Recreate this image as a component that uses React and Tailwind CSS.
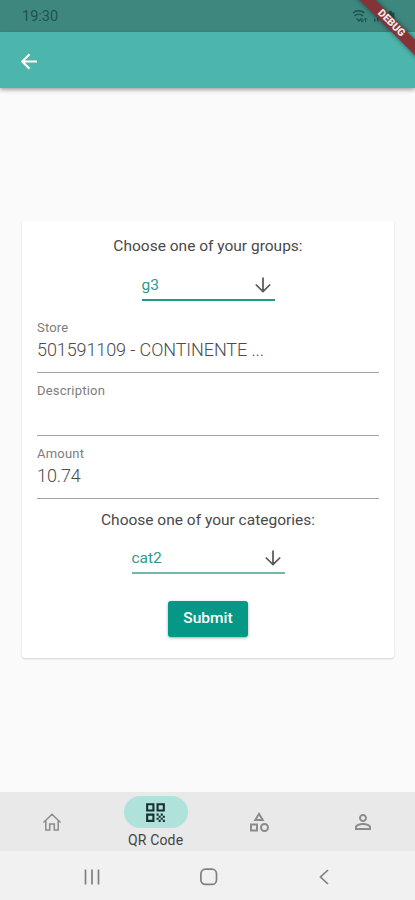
import { useState } from 'react';
import { MdQrCode, MdOutlineCategory, MdPersonOutline } from 'react-icons/md';

function StatusBar() {
  return (
    <div className="h-8 bg-[#3e877f] flex items-center justify-between pl-[22px] pr-4 pt-[2px]">
      <span className="text-[14.5px] leading-none text-[#1f514c]">19:30</span>
      <div className="flex items-center gap-1 mr-1 text-[#204f4b]">
        <svg width="17" height="14" viewBox="0 0 17 14" fill="none" stroke="currentColor">
          <path d="M1 3C4 0 9.500 0 12.500 3M2.500 6C5 3.500 8.500 3.500 11 6M4.500 8.500L7 11L9 8.500" strokeWidth="1.300" />
          <path d="M10 8v4M8.500 10.500L10 12L11.500 10.500M13.500 12V8M12 9.500L13.500 8L15 9.500" strokeWidth="1" />
        </svg>
        <svg width="9" height="10" viewBox="0 0 9 10" fill="currentColor">
          <path d="M1 7h1.500v2.500H1zM4 5h1.500v4.500H4z" />
        </svg>
        <svg width="9" height="13" viewBox="0 0 9 13" fill="currentColor">
          <path d="M3 0h3v1.500h2.500V13h-8V1.500H3z" />
        </svg>
      </div>
    </div>
  );
}

function DebugBanner() {
  return (
    <div className="absolute top-0 right-0 w-16 h-16 overflow-hidden pointer-events-none">
      <div className="absolute left-[-10px] top-[18px] w-[100px] h-[11px] rotate-45 bg-[#863337] shadow-[0_0_5px_rgba(0,0,0,0.5)] flex items-center justify-center">
        <span className="text-[10.5px] leading-none font-black text-[#eee5e5]">DEBUG</span>
      </div>
    </div>
  );
}

function BackIcon() {
  return (
    <svg width="17" height="17" viewBox="0 0 17 17" fill="none" stroke="white" strokeWidth="2.100">
      <path d="M16 8.500H1.500M8.500 1.300L1.300 8.500L8.500 15.700" />
    </svg>
  );
}

function ArrowDown({ className }) {
  return (
    <svg width="16" height="16" viewBox="0 0 16 16" fill="none" stroke="currentColor" strokeWidth="1.700" className={className}>
      <path d="M8 .5V14M.8 7.500L8 14.500L15.200 7.500" />
    </svg>
  );
}

function Dropdown({ value, className }) {
  return (
    <button className={`flex justify-between border-b-2 text-[#2b9c8b] ${className}`}>
      <span className="mt-[2px] text-[15.5px] leading-[21px]">{value}</span>
      <ArrowDown className="mt-1 mr-1 text-[#555]" />
    </button>
  );
}

function Field({ label, value, onChange }) {
  return (
    <label className="block h-[63px] border-b border-[#a2a2a2] pt-[10px]">
      <span className="block text-[13px] leading-4 tracking-[0.2px] text-[#7d7d7d]">{label}</span>
      <input
        value={value}
        onChange={(e) => onChange(e.target.value)}
        className="block w-full h-7 text-[18px] leading-7 tracking-[-0.1px] font-light text-[#4c4c4c] outline-none"
      />
    </label>
  );
}

function HomeIcon() {
  return (
    <svg width="20" height="20" viewBox="0 0 20 20" fill="none" stroke="currentColor" strokeWidth="1.500">
      <path d="M1.500 10.500L10 2.300L18.500 10.500M3.800 9v9h3.900v-6h4.600v6h3.900V9" />
    </svg>
  );
}

function BottomNav() {
  return (
    <nav className="h-[59px] bg-[#e9e9e9] grid grid-cols-4 text-[#8b8b8b]">
      <button className="flex items-center justify-center">
        <HomeIcon />
      </button>
      <button className="flex flex-col items-center pt-1 text-[#444]">
        <span className="w-16 h-8 rounded-full bg-[#b0e2dc] flex items-center justify-center">
          <MdQrCode className="size-[25px] text-[#17302e]" />
        </span>
        <span className="mt-1 text-[14px] leading-4 tracking-[0.15px]">QR Code</span>
      </button>
      <button className="flex items-center justify-center">
        <MdOutlineCategory className="size-6" />
      </button>
      <button className="flex items-center justify-center">
        <MdPersonOutline className="size-6" />
      </button>
    </nav>
  );
}

function SystemNav() {
  return (
    <div className="h-[49px] bg-[#f1f1f1] flex items-center justify-between pl-[84px] pr-[84px] pt-[2px] text-[#808080]">
      <svg width="16" height="16" viewBox="0 0 16 16" stroke="currentColor" strokeWidth="1.700">
        <path d="M1.500 .5v15M8 .5v15M14.500 .5v15" />
      </svg>
      <svg width="18" height="18" viewBox="0 0 18 18" fill="none" stroke="currentColor" strokeWidth="1.700">
        <rect x=".9" y="1.200" width="15.600" height="15.200" rx="4.500" />
      </svg>
      <svg width="14" height="16" viewBox="0 0 14 16" fill="none" stroke="currentColor" strokeWidth="1.700">
        <path d="M11 1L3.500 8l7.500 7" />
      </svg>
    </div>
  );
}

export default function App() {
  const [store, setStore] = useState('501591109 - CONTINENTE ...');
  const [description, setDescription] = useState('');
  const [amount, setAmount] = useState('10.74');

  return (
    <div className="relative h-screen flex flex-col overflow-hidden bg-[#fafafa] font-[Roboto,sans-serif]">
      <StatusBar />
      <header className="h-14 shrink-0 bg-[#4db6ac] flex items-center pl-[21px] pt-[2px] shadow-[0_2px_4px_rgba(0,0,0,0.35)]">
        <BackIcon />
      </header>

      <main className="flex-1 pt-[133px] pl-[22px] pr-[21px]">
        <form
          onSubmit={(e) => e.preventDefault()}
          className="h-[437px] bg-white rounded-[3px] shadow-[0_1px_2px_rgba(0,0,0,0.16)] px-[15px] pt-[15px] flex flex-col"
        >
          <p className="text-center text-[15.5px] leading-5 text-[#494949]">Choose one of your groups:</p>
          <Dropdown value="g3" className="w-[133px] h-[28px] mt-[17px] mx-auto border-[#219987]" />
          <div className="mt-[9px]">
            <Field label="Store" value={store} onChange={setStore} />
            <Field label="Description" value={description} onChange={setDescription} />
            <Field label="Amount" value={amount} onChange={setAmount} />
          </div>
          <p className="mt-[11px] text-center text-[15.5px] leading-5 text-[#494949]">Choose one of your categories:</p>
          <Dropdown value="cat2" className="w-[153px] h-[28px] mt-[16px] mx-auto border-[#70b9a9]" />
          <button className="mt-[27px] mx-auto w-20 h-9 rounded-[3px] bg-[#069887] text-white text-[15.5px] font-medium shadow-[0_1px_3px_rgba(0,0,0,0.35)]">
            Submit
          </button>
        </form>
      </main>

      <BottomNav />
      <SystemNav />
      <DebugBanner />
    </div>
  );
}
